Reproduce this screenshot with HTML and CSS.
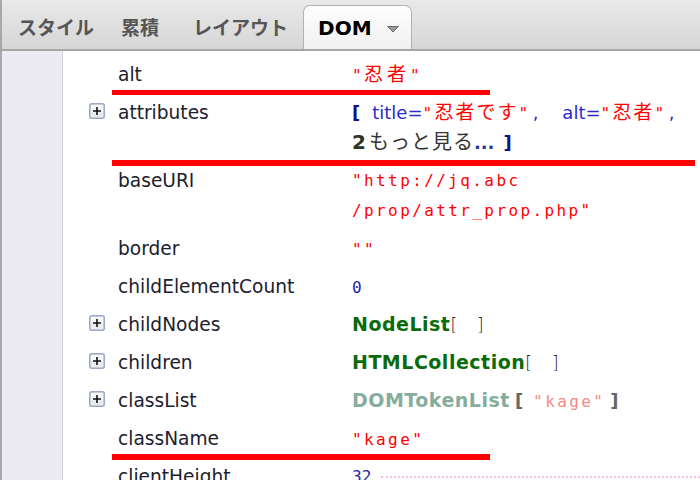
FILE: index.html
```html
<!DOCTYPE html>
<html lang="ja">
<head>
<meta charset="utf-8">
<title>DOM</title>
<link rel="stylesheet" href="styles.css">
</head>
<body>
<div class="panel">
  <div class="tabbar">
    <span class="tab">スタイル</span>
    <span class="tab">累積</span>
    <span class="tab">レイアウト</span>
    <span class="tab active">DOM<svg class="arrow" width="14" height="8" viewBox="0 0 14 8"><path d="M1.5 1.5 H12.5 L7 7 Z" fill="#9a9a9a" stroke="#6e6e6e" stroke-width="1" stroke-linejoin="round"/></svg></span>
  </div>
  <div class="body">
    <div class="gutter"></div>
    <div class="rows">
      <div class="row mark mark-short m1">
        <span class="tw"></span><span class="name">alt</span>
        <span class="val"><span class="str">"<span class="jp">忍者</span>"</span></span>
      </div>
      <div class="row mark mark-long">
        <span class="tw"><svg class="plus" width="16" height="16" viewBox="0 0 16 16"><rect x="0.75" y="0.75" width="14.5" height="14.5" rx="2" fill="#ececf0" stroke="#9aaac6" stroke-width="1.5"/><rect x="2" y="2" width="12" height="6" fill="#fafafa"/><path d="M4 8 H12 M8 4 V12" stroke="#111" stroke-width="1.6"/></svg></span>
        <span class="name">attributes</span>
        <span class="val">
          <span class="line"><span class="brk">[</span><span class="attr a1">title=</span><span class="str">"<span class="jp2">忍者です</span>"</span><span class="attr comma">,</span><span class="attr a2">alt=</span><span class="str">"<span class="jp2">忍者</span>"</span><span class="attr comma">,</span></span>
          <span class="line"><span class="more-n">2</span><span class="more">もっと見る</span><span class="dots">...</span><span class="brk b2">]</span></span>
        </span>
      </div>
      <div class="row">
        <span class="tw"></span><span class="name">baseURI</span>
        <span class="val">
          <span class="line str">"http://jq.abc</span>
          <span class="line str">/prop/attr_prop.php"</span>
        </span>
      </div>
      <div class="row">
        <span class="tw"></span><span class="name">border</span>
        <span class="val"><span class="str">""</span></span>
      </div>
      <div class="row">
        <span class="tw"></span><span class="name">childElementCount</span>
        <span class="val"><span class="num">0</span></span>
      </div>
      <div class="row">
        <span class="tw"><svg class="plus" width="16" height="16" viewBox="0 0 16 16"><rect x="0.75" y="0.75" width="14.5" height="14.5" rx="2" fill="#ececf0" stroke="#9aaac6" stroke-width="1.5"/><rect x="2" y="2" width="12" height="6" fill="#fafafa"/><path d="M4 8 H12 M8 4 V12" stroke="#111" stroke-width="1.6"/></svg></span>
        <span class="name">childNodes</span>
        <span class="val"><span class="obj">NodeList</span><span class="thin">[</span><span class="thin gap">]</span></span>
      </div>
      <div class="row">
        <span class="tw"><svg class="plus" width="16" height="16" viewBox="0 0 16 16"><rect x="0.75" y="0.75" width="14.5" height="14.5" rx="2" fill="#ececf0" stroke="#9aaac6" stroke-width="1.5"/><rect x="2" y="2" width="12" height="6" fill="#fafafa"/><path d="M4 8 H12 M8 4 V12" stroke="#111" stroke-width="1.6"/></svg></span>
        <span class="name">children</span>
        <span class="val"><span class="obj">HTMLCollection</span><span class="thin">[</span><span class="thin gap">]</span></span>
      </div>
      <div class="row">
        <span class="tw"><svg class="plus" width="16" height="16" viewBox="0 0 16 16"><rect x="0.75" y="0.75" width="14.5" height="14.5" rx="2" fill="#ececf0" stroke="#9aaac6" stroke-width="1.5"/><rect x="2" y="2" width="12" height="6" fill="#fafafa"/><path d="M4 8 H12 M8 4 V12" stroke="#111" stroke-width="1.6"/></svg></span>
        <span class="name">classList</span>
        <span class="val"><span class="obj faded">DOMTokenList</span><span class="brk grey">[</span><span class="str pink">"kage"</span><span class="brk grey b3">]</span></span>
      </div>
      <div class="row mark mark-short m3">
        <span class="tw"></span><span class="name">className</span>
        <span class="val"><span class="str">"kage"</span></span>
      </div>
      <div class="row">
        <span class="tw"></span><span class="name">clientHeight</span>
        <span class="val flexval"><span class="num">32</span><span class="dotfill"></span></span>
      </div>
    </div>
  </div>
</div>
</body>
</html>
```

FILE: styles.css
```css
* { box-sizing: border-box; }
html, body { margin: 0; padding: 0; background: #fff; }

.panel {
  width: 700px;
  height: 480px;
  overflow: hidden;
  border-left: 2px solid #a8a8a8;
  display: flex;
  flex-direction: column;
  font-family: "DejaVu Sans", "Noto Sans CJK JP", sans-serif;
}

.tabbar {
  flex: none;
  height: 51px;
  display: flex;
  align-items: flex-end;
  gap: 30px;
  padding-left: 16px;
  background: linear-gradient(#e9e9e9, #d6d6d6);
  border-bottom: 2px solid #a6a6a6;
}

.tab {
  height: 44px;
  line-height: 44px;
  font-family: "Noto Sans CJK JP", sans-serif;
  font-size: 19px;
  font-weight: 700;
  color: #555;
  white-space: nowrap;
}
.tab:nth-child(2) { margin-left: -3px; }
.tab:nth-child(3) { margin-left: 4px; }

.tab.active {
  margin-left: -15px;
  width: 109px;
  display: flex;
  align-items: center;
  gap: 14px;
  padding-left: 14px;
  border: 1.5px solid #b2b2b2;
  border-bottom: none;
  border-radius: 7px 7px 0 0;
  background: linear-gradient(#fdfdfd, #f1f1f1);
  font-family: "DejaVu Sans", sans-serif;
  font-size: 20px;
  color: #000;
}

.arrow { display: block; margin-top: 2px; }

.body {
  flex: 1;
  display: flex;
  min-height: 0;
}

.gutter {
  flex: none;
  width: 61px;
  background: #ebebf1;
  border-right: 1px solid #cfd0d8;
}

.rows {
  flex: 1;
  padding: 5px 0 0 26px;
}

.row {
  position: relative;
  display: grid;
  grid-template-columns: 29px 234px 1fr;
  padding: 4px 0;
  line-height: 30px;
  font-size: 18.6px;
  color: #20202c;
}

.tw { height: 30px; }
.plus { display: block; margin-top: 5px; }

.name { white-space: nowrap; height: 30px; }

.val { white-space: nowrap; font-size: 18px; }
.val span { line-height: 1; }
.val .line { display: block; height: 30px; line-height: 30px; }

.mark::after {
  content: "";
  position: absolute;
  left: 23px;
  height: 5px;
  background: #ff0000;
}
.mark-short::after { width: 378px; }
.mark-long::after { right: 5px; height: 6px; bottom: -4px; }
.m1::after { bottom: -1px; }
.m3::after { bottom: -2px; height: 6px; }

.str {
  font-family: "DejaVu Sans Mono", "Noto Sans CJK JP", monospace;
  font-size: 16px;
  letter-spacing: 2.4px;
  color: #ff0000;
}
.jp {
  font-family: "Noto Sans CJK JP", sans-serif;
  font-size: 19px;
  letter-spacing: 4px;
}
.jp2 {
  font-family: "Noto Sans CJK JP", sans-serif;
  font-size: 19px;
  letter-spacing: 2px;
}

.brk {
  font-weight: 700;
  color: #10108a;
}
.brk.grey { color: #666; margin-left: 5px; }
.b2 { margin-left: 9px; }
.b3 { margin-left: 11px; }
.pink { margin-left: 10px; }

.attr {
  font-size: 18px;
  color: #2a2ad0;
}
.a1 { margin-left: 12px; }
.a2 { margin-left: 24px; }
.comma { margin-left: 2px; }

.more-n {
  font-weight: 700;
  font-size: 20px;
  color: #2e3424;
}
.more {
  font-family: "Noto Sans CJK JP", sans-serif;
  font-size: 20px;
  letter-spacing: 1px;
  color: #333;
  margin-left: 3px;
}
.dots {
  font-weight: 700;
  color: #2c3a8c;
  letter-spacing: 0;
}

.num {
  font-family: "DejaVu Sans Mono", monospace;
  font-size: 16px;
  color: #1e1ea8;
}

.obj {
  font-weight: 700;
  font-size: 19px;
  letter-spacing: 0.5px;
  color: #0b6b0b;
}
.obj.faded { color: #86ad9c; }

.thin {
  font-weight: 300;
  font-size: 17px;
  color: #222;
}
.thin.gap { margin-left: 20px; }

.pink { color: #f08a8a; }

.flexval {
  display: flex;
  align-items: center;
  height: 30px;
}
.dotfill {
  flex: 1;
  margin-left: 10px;
  border-top: 2px dotted #f4c0e6;
}
```
